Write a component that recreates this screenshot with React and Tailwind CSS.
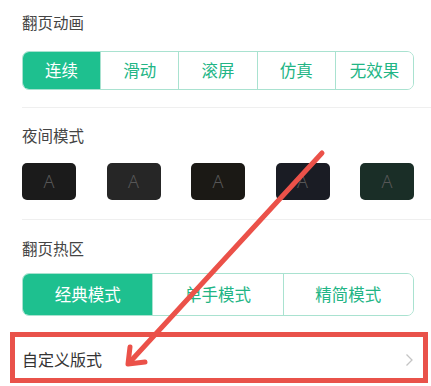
import React from "react";

const font = { fontFamily: '"Noto Sans CJK SC", "Noto Sans", sans-serif' };

function Seg({ items, active, h }) {
  return (
    <div className={`ml-[22px] mr-[17px] flex ${h} rounded-[7px] border border-[#a9e2d0] overflow-hidden`}>
      {items.map((t, i) => (
        <div
          key={t}
          className={`flex-1 flex items-center justify-center text-[16.5px] ${
            i === active ? "bg-[#1ec08f] text-white" : "text-[#22b585] bg-white"
          } ${i > 0 ? "border-l border-[#a9e2d0]" : ""}`}
        >
          {t}
        </div>
      ))}
    </div>
  );
}

export default function App() {
  const swatches = ["#1b1b1b", "#262626", "#1b1915", "#1a1c24", "#1a2e27"];
  return (
    <div className="relative w-[431px] h-[386px] bg-white overflow-hidden" style={font}>
      <div className="pt-[10px]">
        <div className="px-[22px] text-[15.5px] leading-[24px] text-[#444]">翻页动画</div>
        <div className="mt-[17px]">
          <Seg items={["连续", "滑动", "滚屏", "仿真", "无效果"]} active={0} h="h-[39px]" />
        </div>
        <div className="mt-[17px] ml-[22px] h-px bg-[#efefef]" />
        <div className="mt-[15px] px-[22px] text-[15.5px] leading-[24px] text-[#444]">夜间模式</div>
        <div className="mt-[16px] pl-[22px] pr-[17px] flex justify-between">
          {swatches.map((c) => (
            <div
              key={c}
              className="w-[54px] h-[37px] rounded-[5px] flex items-center justify-center text-[18px] font-light text-[#575757]"
              style={{ backgroundColor: c, fontFamily: '"Noto Sans", sans-serif' }}
            >
              A
            </div>
          ))}
        </div>
        <div className="mt-[19px] ml-[22px] h-px bg-[#efefef]" />
        <div className="mt-[16px] px-[22px] text-[15.5px] leading-[24px] text-[#444]">翻页热区</div>
        <div className="mt-[13px]">
          <Seg items={["经典模式", "单手模式", "精简模式"]} active={0} h="h-[43px]" />
        </div>
        <div className="relative mt-[16px] h-[51px] flex items-center justify-between pl-[22px] pr-[17px]">
          <span className="text-[16px] text-[#333] pt-[2px]">自定义版式</span>
          <svg width="9" height="14" viewBox="0 0 9 14" className="mt-[4px]">
            <path d="M1.5 1.5 L7 7 L1.5 12.5" fill="none" stroke="#c4c4c4" strokeWidth="1.3" />
          </svg>
          <div className="absolute left-[10px] right-[3px] top-0 bottom-0 border-[5px] border-[#e9524a]" />
        </div>
      </div>
      <svg className="absolute inset-0 pointer-events-none" width="431" height="386" viewBox="0 0 431 386">
        <g fill="none" stroke="#eb5149" strokeWidth="5" strokeLinecap="round" strokeLinejoin="round">
          <path d="M322 153 L129 363" />
          <path d="M130 347 L128 364 L145 362" />
        </g>
      </svg>
    </div>
  );
}
